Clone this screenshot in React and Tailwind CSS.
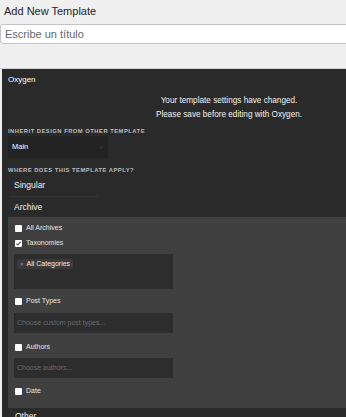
const Check = ({ checked }) => (
  <span className="w-[7px] h-[7px] bg-white rounded-[1px] flex items-center justify-center shrink-0">
    {checked && (
      <svg viewBox="0 0 10 10" className="w-[7px] h-[7px]">
        <path d="M2 5.2l2 2 4-4.6" fill="none" stroke="#555" strokeWidth="1.6" />
      </svg>
    )}
  </span>
);

const CheckRow = ({ label, checked, className = '' }) => (
  <div className={`h-[12px] flex items-center gap-[4px] ml-[1px] ${className}`}>
    <Check checked={checked} />
    <span className="text-[7px] text-[#e6e6e6]">{label}</span>
  </div>
);

const App = () => {
  return (
    <div className="w-[346px] h-[417px] overflow-hidden bg-[#f0f0f1] font-['Liberation_Sans',Arial,sans-serif]">
      {/* Header */}
      <h1 className="pl-[4px] pt-[3px] h-[24px] text-[11px] leading-[16px] text-[#1d2327]">Add New Template</h1>
      <div className="w-[360px] h-[20px] bg-white border border-[#c3c4c7] rounded-[3px] flex items-center pl-[4px]">
        <span className="text-[11px] text-[#646970]">Escribe un título</span>
      </div>
      <div className="h-[25px] border-b border-[#d4d4d4]" />

      {/* Oxygen panel */}
      <div className="ml-[2px] w-[454px] bg-[#2a2a2a]">
        <div className="h-[22px] flex items-center pl-[6px] text-[8px] text-white">Oxygen</div>
        <div className="mt-[3px] text-center text-[8.2px] leading-[14px] text-[#f2f2f2]">
          <p>Your template settings have changed.</p>
          <p>Please save before editing with Oxygen.</p>
        </div>
        <div className="mt-[4px] h-[10px] flex items-center pl-[6px] text-[5.8px] font-bold uppercase tracking-[0.5px] text-[#bdbdbd]">
          Inherit design from other template
        </div>
        <div className="ml-[6px] w-[100px] h-[22px] bg-[#222] flex items-center justify-between px-[4px]">
          <span className="text-[7.5px] text-white">Main</span>
          <svg viewBox="0 0 8 5" className="w-[5px] h-[3px]">
            <path d="M1 1l3 3 3-3" fill="none" stroke="#444" strokeWidth="1.2" />
          </svg>
        </div>
        <div className="mt-[7px] h-[10px] flex items-center pl-[6px] text-[5.8px] font-bold uppercase tracking-[0.5px] text-[#bdbdbd]">
          Where does this template apply?
        </div>
        <div className="h-[21px] flex items-center pl-[12px] text-[8.5px] text-[#f0f0f0]">Singular</div>
        <div className="ml-[8px] w-[88px] h-px bg-[#333]" />
        <div className="h-[20px] flex items-center pl-[12px] text-[8.5px] text-[#f0f0f0]">Archive</div>

        {/* Archive options */}
        <div className="ml-[6px] bg-[#404040] pl-[6px] pt-[5px] pb-[11px]">
          <CheckRow label="All Archives" />
          <CheckRow label="Taxonomies" checked className="mt-[3px]" />
          <div className="mt-[5px] w-[159px] h-[35px] bg-[#2d2d2d] pt-[5px] pl-[3px] flex items-start">
            <span className="flex items-center gap-[3px] h-[10px] px-[3px] bg-[#3a3a3a] rounded-[2px]">
              <span className="text-[6px] leading-[10px] text-[#999]">×</span>
              <span className="text-[7px] leading-[10px] text-[#eee]">All Categories</span>
            </span>
          </div>
          <CheckRow label="Post Types" className="mt-[6px]" />
          <div className="mt-[6px] w-[159px] h-[20px] bg-[#2d2d2d] flex items-center pl-[3px] text-[7px] text-[#6a6a6a]">
            Choose custom post types...
          </div>
          <CheckRow label="Authors" className="mt-[8px]" />
          <div className="mt-[5px] w-[159px] h-[20px] bg-[#2d2d2d] flex items-center pl-[3px] text-[7px] text-[#6a6a6a]">
            Choose authors...
          </div>
          <CheckRow label="Date" className="mt-[7px]" />
        </div>
        <div className="h-[20px] pl-[13px] pt-[3px] text-[8.5px] leading-[10px] text-[#f0f0f0]">Other</div>
      </div>
    </div>
  );
};

export default App;
